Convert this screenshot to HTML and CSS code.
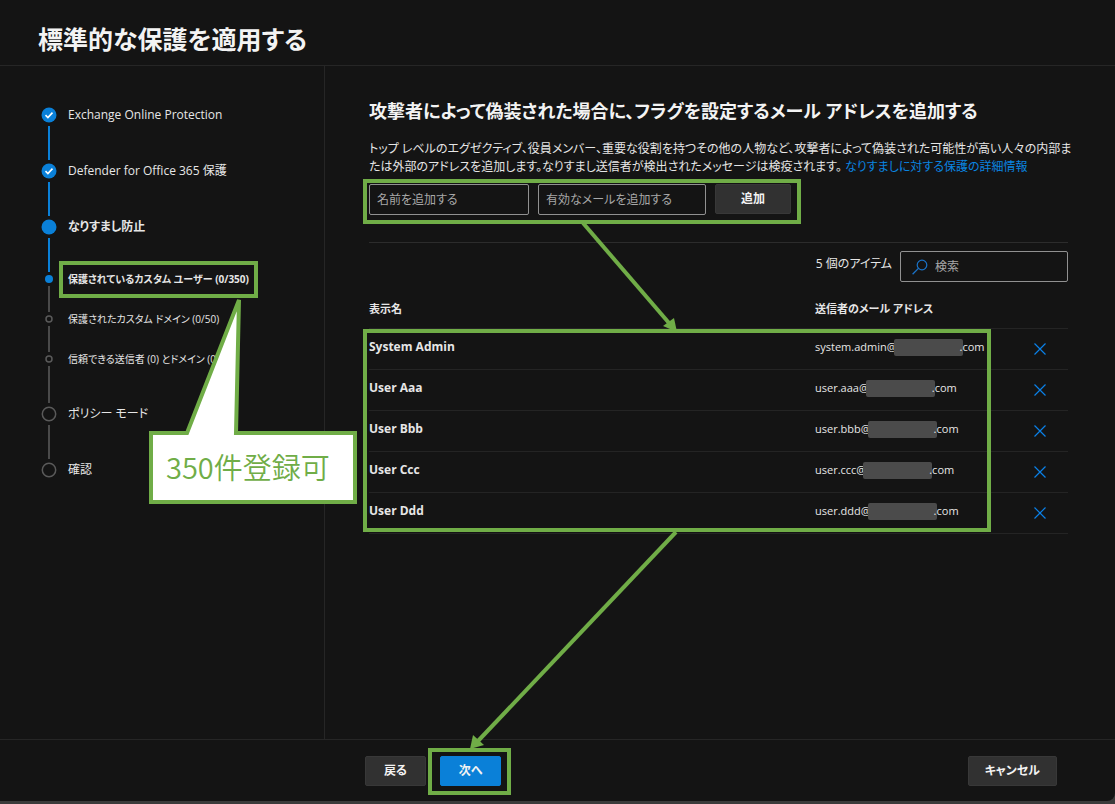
FILE: index.html
```html
<!DOCTYPE html>
<html lang="ja">
<head>
    <meta charset="UTF-8">
    <meta name="viewport" content="width=device-width, initial-scale=1.0">
    <title>標準的な保護を適用する</title>
    <link rel="stylesheet" href="styles.css">
</head>
<body>
    <div class="panel">
        <header class="panel-header">
            <h1>標準的な保護を適用する</h1>
        </header>

        <div class="panel-body">
            <nav class="sidebar">
                <ol class="steps">
                    <li class="step done">
                        <div class="marker"><svg class="dot" viewBox="0 0 16 16"><circle cx="8" cy="8" r="7.5" fill="#0a80d8"/><path d="M4.5 8.2l2.4 2.3 4.6-4.9" fill="none" stroke="#fff" stroke-width="1.6"/></svg><i></i></div>
                        <span>Exchange Online Protection</span>
                    </li>
                    <li class="step done">
                        <div class="marker"><svg class="dot" viewBox="0 0 16 16"><circle cx="8" cy="8" r="7.5" fill="#0a80d8"/><path d="M4.5 8.2l2.4 2.3 4.6-4.9" fill="none" stroke="#fff" stroke-width="1.6"/></svg><i></i></div>
                        <span>Defender for Office 365 保護</span>
                    </li>
                    <li class="step done current">
                        <div class="marker"><svg class="dot" viewBox="0 0 16 16"><circle cx="8" cy="8" r="7.5" fill="#0a80d8"/></svg><i></i></div>
                        <span>なりすまし防止</span>
                    </li>
                    <li class="step sub current">
                        <div class="marker"><svg class="dot" viewBox="0 0 8 8"><circle cx="4" cy="4" r="4" fill="#0a80d8"/></svg><i></i></div>
                        <span class="framed">保護されているカスタム ユーザー (0/350)</span>
                    </li>
                    <li class="step sub">
                        <div class="marker"><svg class="dot" viewBox="0 0 8 8"><circle cx="4" cy="4" r="3" fill="none" stroke="#5a5a5a" stroke-width="1.5"/></svg><i></i></div>
                        <span>保護されたカスタム ドメイン (0/50)</span>
                    </li>
                    <li class="step sub last-sub">
                        <div class="marker"><svg class="dot" viewBox="0 0 8 8"><circle cx="4" cy="4" r="3" fill="none" stroke="#5a5a5a" stroke-width="1.5"/></svg><i></i></div>
                        <span>信頼できる送信者 (0) とドメイン (0)</span>
                    </li>
                    <li class="step">
                        <div class="marker"><svg class="dot" viewBox="0 0 16 16"><circle cx="8" cy="8" r="6.7" fill="none" stroke="#5a5a5a" stroke-width="1.5"/></svg><i></i></div>
                        <span>ポリシー モード</span>
                    </li>
                    <li class="step end">
                        <div class="marker"><svg class="dot" viewBox="0 0 16 16"><circle cx="8" cy="8" r="6.7" fill="none" stroke="#5a5a5a" stroke-width="1.5"/></svg></div>
                        <span>確認</span>
                    </li>
                </ol>
            </nav>

            <main class="content">
                <h2>攻撃者によって偽装された場合に、フラグを設定するメール アドレスを追加する</h2>
                <p class="description">トップ レベルのエグゼクティブ、役員メンバー、重要な役割を持つその他の人物など、攻撃者によって偽装された可能性が高い人々の内部または外部のアドレスを追加します。なりすまし送信者が検出されたメッセージは検疫されます。 <a href="#">なりすましに対する保護の詳細情報</a></p>

                <form class="add-form">
                    <input type="text" class="name-input" aria-label="名前" placeholder="名前を追加する">
                    <input type="email" class="mail-input" aria-label="メール" placeholder="有効なメールを追加する">
                    <button type="button" class="btn">追加</button>
                </form>

                <div class="toolbar">
                    <span class="count">5 個のアイテム</span>
                    <label class="search">
                        <svg viewBox="0 0 16 16"><circle cx="10" cy="6" r="4.8" fill="none" stroke="#1a73c9" stroke-width="1.2"/><path d="M6.4 9.4L.6 15.2" stroke="#1a73c9" stroke-width="1.3"/></svg>
                        <input type="search" aria-label="検索" placeholder="検索">
                    </label>
                </div>

                <div class="table-box">
                    <table>
                        <thead>
                            <tr><th class="col-name">表示名</th><th class="col-mail">送信者のメール アドレス</th><th class="col-del"></th></tr>
                        </thead>
                        <tbody>
                            <tr><td class="name">System Admin</td><td>system.admin@<span class="mask"></span>.com</td><td><button type="button" class="del" aria-label="削除"><svg viewBox="0 0 12 12"><path d="M.5.5l11 11M11.5.5l-11 11"/></svg></button></td></tr>
                            <tr><td class="name">User Aaa</td><td>user.aaa@<span class="mask"></span>.com</td><td><button type="button" class="del" aria-label="削除"><svg viewBox="0 0 12 12"><path d="M.5.5l11 11M11.5.5l-11 11"/></svg></button></td></tr>
                            <tr><td class="name">User Bbb</td><td>user.bbb@<span class="mask"></span>.com</td><td><button type="button" class="del" aria-label="削除"><svg viewBox="0 0 12 12"><path d="M.5.5l11 11M11.5.5l-11 11"/></svg></button></td></tr>
                            <tr><td class="name">User Ccc</td><td>user.ccc@<span class="mask"></span>.com</td><td><button type="button" class="del" aria-label="削除"><svg viewBox="0 0 12 12"><path d="M.5.5l11 11M11.5.5l-11 11"/></svg></button></td></tr>
                            <tr><td class="name">User Ddd</td><td>user.ddd@<span class="mask"></span>.com</td><td><button type="button" class="del" aria-label="削除"><svg viewBox="0 0 12 12"><path d="M.5.5l11 11M11.5.5l-11 11"/></svg></button></td></tr>
                        </tbody>
                    </table>
                </div>
            </main>
        </div>

        <footer class="panel-footer">
            <button type="button" class="btn">戻る</button>
            <div class="next-box"><button type="button" class="btn primary">次へ</button></div>
            <button type="button" class="btn cancel">キャンセル</button>
        </footer>
    </div>

    <!-- arrows and callout drawn over the panel -->
    <svg class="notes" width="1115" height="804" viewBox="0 0 1115 804">
        <g stroke="#70ad47" stroke-width="4">
            <path d="M583 223L669 323"/>
            <path d="M676 532L478 741"/>
        </g>
        <path d="M677 332L663 326L674 318Z" fill="#70ad47"/>
        <path d="M470 749L473 735L484 745Z" fill="#70ad47"/>
        <path d="M151 433H187L239 300L236 433H355V502H151Z" fill="#fff" stroke="#70ad47" stroke-width="4" stroke-miterlimit="2"/>
        <text x="166" y="479">350件登録可</text>
    </svg>
</body>
</html>
```
FILE: styles.css
```css
* {
    margin: 0;
    padding: 0;
    box-sizing: border-box;
}

html {
    background: #3b3b3b;
}

body {
    min-height: 100vh;
    position: relative;
    display: flex;
    padding-bottom: 3px;
    font-family: "Open Sans", "Noto Sans CJK JP", sans-serif;
    font-feature-settings: "palt";
    font-size: 12px;
    line-height: 18px;
    color: #e6e6e6;
}

button, input {
    font: inherit;
    font-feature-settings: inherit;
    color: inherit;
}

.panel {
    flex: 1;
    display: flex;
    flex-direction: column;
    background: #141414;
    border-bottom-right-radius: 8px;
}

.panel-header {
    padding: 21px 38px 8px;
    border-bottom: 1px solid #262626;
}

h1 {
    font-size: 25px;
    line-height: 36px;
    color: #f3f3f3;
}

.panel-body {
    flex: 1;
    display: flex;
}

.sidebar {
    flex: 0 0 325px;
    padding: 41px 0 0 41px;
    border-right: 1px solid #262626;
}

.steps {
    list-style: none;
}

.step {
    display: flex;
    height: 56px;
    gap: 11px;
    line-height: 16px;
    white-space: nowrap;
}

.marker {
    width: 16px;
    display: flex;
    flex-direction: column;
    align-items: center;
    gap: 3px;
    padding-bottom: 3px;
}

.marker .dot {
    flex: none;
    width: 16px;
    height: 16px;
}

.marker i {
    flex: 1;
    width: 2px;
    background: #4a4a4a;
}

.done .marker i {
    background: #0a80d8;
}

.step.sub {
    height: 40px;
    font-size: 10px;
}

.step.last-sub {
    height: 51px;
}

.step.end {
    height: 16px;
}

.sub .marker .dot {
    width: 8px;
    height: 8px;
}

.sub span {
    height: 16px;
    margin-top: -4px;
}

.current {
    font-weight: bold;
}

.framed, .add-form, .table-box, .next-box {
    position: relative;
}

.framed::after, .add-form::after, .table-box::after, .next-box::after {
    content: "";
    position: absolute;
    box-sizing: border-box;
    border: 4px solid #70ad47;
    pointer-events: none;
}

.framed::after {
    inset: -10px -9px -11px -9px;
}

.content {
    flex: 1;
    padding: 30px 47px 0 44px;
}

h2 {
    font-size: 18px;
    line-height: 30px;
    color: #f3f3f3;
    white-space: nowrap;
}

.description {
    margin: 14px -8px 8px 0;
}

a {
    color: #0a84e0;
    text-decoration: none;
}

.add-form {
    display: flex;
    gap: 9px;
    padding-bottom: 27px;
    border-bottom: 1px solid #2c2c2c;
}

.add-form::after {
    inset: -5px auto 18px -6px;
    width: 438px;
}

.add-form input {
    height: 31px;
    padding: 0 7px;
    background: transparent;
    border: 1px solid #919191;
    border-radius: 2px;
}

.add-form .name-input {
    width: 160px;
}

.add-form .mail-input {
    width: 168px;
}

input::placeholder {
    color: #a8a8a8;
    opacity: 1;
}

.btn {
    height: 30px;
    min-width: 61px;
    padding: 0 16px;
    background: #313131;
    border: 1px solid #383838;
    border-radius: 2px;
    font-weight: bold;
    color: #f3f3f3;
}

.add-form .btn {
    min-width: 76px;
}

.toolbar {
    display: flex;
    justify-content: flex-end;
    gap: 8px;
    padding: 8px 0;
}

.count {
    padding-top: 4px;
}

.search {
    display: flex;
    align-items: center;
    gap: 7px;
    width: 168px;
    height: 31px;
    padding: 0 11px;
    border: 1px solid #919191;
    border-radius: 2px;
}

.search svg {
    flex: none;
    width: 16px;
    height: 16px;
}

.search input {
    flex: 1;
    min-width: 0;
    background: transparent;
    border: none;
    outline: none;
}

.table-box::after {
    inset: 39px 77px 2px -6px;
}

table {
    width: 100%;
    border-collapse: collapse;
    table-layout: fixed;
    font-size: 11px;
    text-align: left;
}

th {
    height: 38px;
}

tr {
    border-bottom: 1px solid #242424;
}

.col-mail {
    width: 219px;
}

.col-del {
    width: 34px;
}

td {
    height: 41px;
    padding-bottom: 3px;
    white-space: nowrap;
}

.name {
    font-size: 12px;
    font-weight: bold;
}

/* hidden domain part, slightly over the neighbouring letters */
.mask {
    display: inline-block;
    width: 69px;
    height: 17px;
    margin: 0 -3px;
    border-radius: 2px;
    background: #4b4b4b;
    vertical-align: middle;
}

.del {
    display: block;
    width: 12px;
    height: 12px;
    margin-top: 3px;
    background: none;
    border: none;
}

.del svg {
    display: block;
    fill: none;
    stroke: #0a80e8;
    stroke-width: 1.2;
}

.panel-footer {
    display: flex;
    gap: 14px;
    padding: 16px 58px 15px 365px;
    border-top: 1px solid #262626;
}

.next-box::after {
    inset: -8px -10px -9px -12px;
}

.primary {
    background: #0a80d8;
    border-color: #0a80d8;
}

.cancel {
    margin-left: auto;
}

.notes {
    position: absolute;
    top: 0;
    left: 0;
    pointer-events: none;
}

.notes text {
    font-family: "Noto Sans CJK JP", sans-serif;
    font-size: 29px;
    font-weight: 350;
    fill: #70ad47;
}
```
